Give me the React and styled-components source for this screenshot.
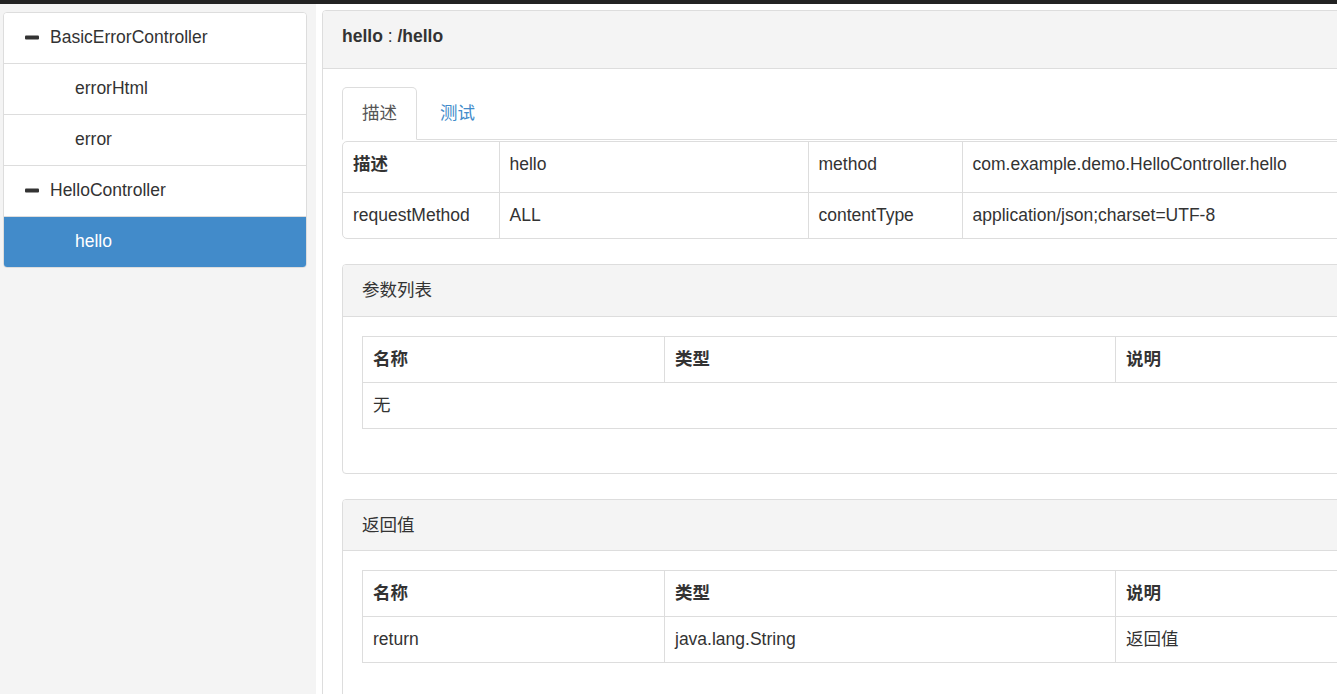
import React from 'react';
import styled, { createGlobalStyle } from 'styled-components'

const GlobalStyle = createGlobalStyle`
  html, body {
    margin: 0;
    overflow: hidden;
  }
  body {
    font-family: "Liberation Sans", Arial, "Noto Sans CJK SC", sans-serif;
    font-size: 17.5px;
    line-height: 25px;
    color: #333;
    background: #fff;
  }
  * { box-sizing: border-box; }
`

const TopBar = styled.div`
  height: 4px;
  background: #222;
`

const Layout = styled.div`
  display: flex;
  height: calc(100vh - 4px);
`

const Sidebar = styled.aside`
  flex: none;
  width: 316px;
  background: #f4f4f4;
  padding: 8px 9px 0 3px;
`

const ListGroup = styled.div`
  border: 1px solid #ddd;
  border-radius: 4px;
  background: #fff;
  overflow: hidden;
`

const ListItem = styled.a`
  display: flex;
  align-items: center;
  height: ${p => (p.$last ? '50px' : '51px')};
  padding: 0 18px 2px ${p => (p.$child ? '71px' : '21px')};
  border-bottom: ${p => (p.$last ? 'none' : '1px solid #ddd')};
  background: ${p => (p.$active ? '#428bca' : '#fff')};
  color: ${p => (p.$active ? '#fff' : '#333')};
  text-decoration: none;
  cursor: pointer;
`

const MinusIcon = styled.svg`
  flex: none;
  width: 14px;
  height: 5px;
  margin-right: 11px;
`

const Main = styled.main`
  flex: none;
  padding: 6px 0 0 6px;
`

const Panel = styled.section`
  width: ${p => p.$width || 'auto'};
  border: 1px solid #ddd;
  border-radius: 4px;
  background: #fff;
  margin-bottom: ${p => p.$mb || '0'};
`

const PanelHeading = styled.div`
  background: #f4f4f4;
  border-bottom: 1px solid #ddd;
  border-radius: 3px 3px 0 0;
  padding: ${p => p.$pad || '13px 19px 12.5px'};
`

const Title = styled.div`
  b { font-weight: 700; }
`

const PanelBody = styled.div`
  padding: ${p => p.$pad || '19px'};
`

const Tabs = styled.ul`
  display: flex;
  margin: 0;
  padding: 0;
  list-style: none;
  border-bottom: 1px solid #ddd;
`

const Tab = styled.li`
  margin-right: 3px;
  margin-bottom: -1px;
  padding: 13px 19px;
  border: 1px solid ${p => (p.$active ? '#ddd' : 'transparent')};
  border-bottom-color: transparent;
  border-radius: 5px 5px 0 0;
  background: ${p => (p.$active ? '#fff' : 'transparent')};
  color: ${p => (p.$active ? '#555' : '#428bca')};
  cursor: pointer;
`

const InfoBox = styled.div`
  border: 1px solid #ddd;
  border-radius: 5px;
  overflow: hidden;
  margin-top: 1px;
  margin-bottom: 25px;
`

const Table = styled.table`
  width: 100%;
  border-collapse: collapse;
  margin-bottom: ${p => p.$mb || '0'};
  border: ${p => (p.$bordered ? '1px solid #ddd' : 'none')};
`

const Cell = styled.td`
  text-align: left;
  vertical-align: middle;
  font-weight: ${p => (p.$bold ? 700 : 400)};
  padding: ${p => p.$pad || '10px'};
  border: 1px solid #ddd;
  width: ${p => p.$w || 'auto'};
`

const InfoRow = styled.tr`
  td { border-top: none; }
  td:first-child { border-left: none; }
  td:last-child { border-right: none; }
  &:last-child td { border-bottom: none; }
`

function Minus() {
  return (
    <MinusIcon viewBox="0 0 14 5">
      <rect x="0" y="0.5" width="14" height="4" rx="1" fill="#333" />
    </MinusIcon>
  )
}

function ParamTable({ rows }) {
  return (
    <Table $bordered $mb="25px">
      <thead>
        <tr>
          <Cell as="th" $bold $w="302px">名称</Cell>
          <Cell as="th" $bold $w="451px">类型</Cell>
          <Cell as="th" $bold>说明</Cell>
        </tr>
      </thead>
      <tbody>
        {rows.length === 0 ? (
          <tr><Cell colSpan={3}>无</Cell></tr>
        ) : rows.map(r => (
          <tr key={r[0]}>
            <Cell>{r[0]}</Cell>
            <Cell>{r[1]}</Cell>
            <Cell>{r[2]}</Cell>
          </tr>
        ))}
      </tbody>
    </Table>
  )
}

const firstRowPad = '10px 10px 15px'

function App() {
  return (
    <>
      <GlobalStyle />
      <TopBar />
      <Layout>
        <Sidebar>
          <ListGroup>
            <ListItem><Minus />BasicErrorController</ListItem>
            <ListItem $child>errorHtml</ListItem>
            <ListItem $child>error</ListItem>
            <ListItem><Minus />HelloController</ListItem>
            <ListItem $child $active $last>hello</ListItem>
          </ListGroup>
        </Sidebar>
        <Main>
          <Panel $width="1075px">
            <PanelHeading $pad="13px 19px 19px">
              <Title><b>hello</b> : <b>/hello</b></Title>
            </PanelHeading>
            <PanelBody $pad="18px 19px">
              <Tabs>
                <Tab $active>描述</Tab>
                <Tab>测试</Tab>
              </Tabs>
              <InfoBox>
                <Table>
                  <tbody>
                    <InfoRow>
                      <Cell $bold $w="156px" $pad={firstRowPad}>描述</Cell>
                      <Cell $w="309px" $pad={firstRowPad}>hello</Cell>
                      <Cell $w="154px" $pad={firstRowPad}>method</Cell>
                      <Cell $pad={firstRowPad}>com.example.demo.HelloController.hello</Cell>
                    </InfoRow>
                    <InfoRow>
                      <Cell>requestMethod</Cell>
                      <Cell>ALL</Cell>
                      <Cell>contentType</Cell>
                      <Cell>application/json;charset=UTF-8</Cell>
                    </InfoRow>
                  </tbody>
                </Table>
              </InfoBox>
              <Panel $mb="25px">
                <PanelHeading>参数列表</PanelHeading>
                <PanelBody>
                  <ParamTable rows={[]} />
                </PanelBody>
              </Panel>
              <Panel $mb="25px">
                <PanelHeading>返回值</PanelHeading>
                <PanelBody>
                  <ParamTable rows={[['return', 'java.lang.String', '返回值']]} />
                </PanelBody>
              </Panel>
            </PanelBody>
          </Panel>
        </Main>
      </Layout>
    </>
  );
}

export default App;
